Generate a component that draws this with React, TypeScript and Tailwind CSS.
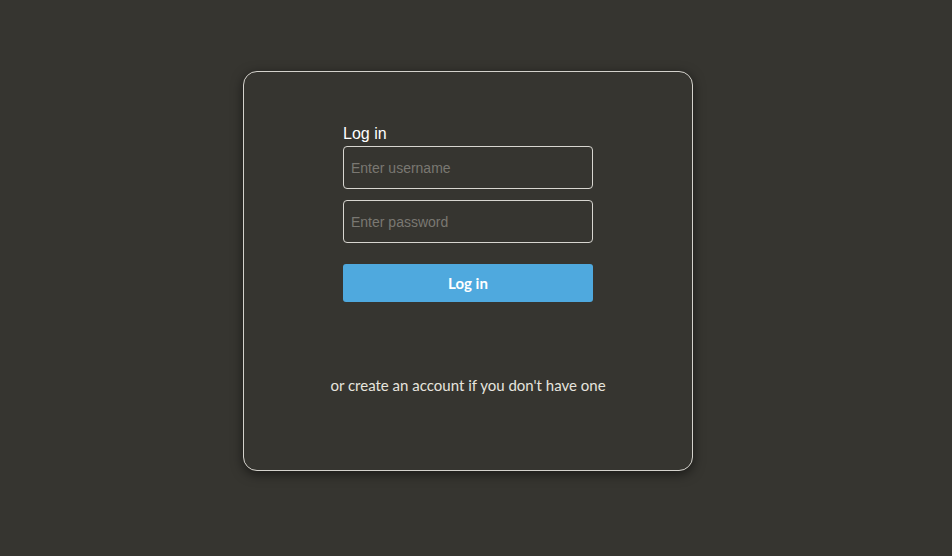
export default function App() {
	return (
		<div className="min-h-screen w-full bg-[#363530] pt-[71px] pr-[16px] flex justify-center">
			<div className="w-[450px] h-[400px] rounded-[14px] border border-[#d4d2cc] shadow-[0_3px_12px_rgba(0,0,0,0.55)] flex flex-col items-center pt-[52px]">
				<form className="w-[250px] flex flex-col" onSubmit={(e) => e.preventDefault()}>
					<label className="text-[16px] leading-[20px] text-white font-['Liberation_Sans',Arial,sans-serif]">Log in</label>
					<input
						type="text"
						placeholder="Enter username"
						className="mt-[2px] h-[43px] rounded-[4px] border border-[#d8d6d0] bg-transparent px-[7px] text-[14px] text-white placeholder:text-[#7a7872] font-['Liberation_Sans',Arial,sans-serif] outline-none"
					/>
					<input
						type="password"
						placeholder="Enter password"
						className="mt-[11px] h-[43px] rounded-[4px] border border-[#d8d6d0] bg-transparent px-[7px] text-[14px] text-white placeholder:text-[#7a7872] font-['Liberation_Sans',Arial,sans-serif] outline-none"
					/>
					<button
						type="submit"
						className="mt-[21px] h-[38px] rounded-[3px] bg-[#4fa9de] text-white text-[15px] font-bold font-['Source_Sans_Pro',Lato,sans-serif]"
					>
						Log in
					</button>
				</form>
				<p className="mt-[72px] text-[15px] text-[#e6e4de] font-['Source_Sans_Pro',Lato,sans-serif]">
					or create an account if you don't have one
				</p>
			</div>
		</div>
	);
}
